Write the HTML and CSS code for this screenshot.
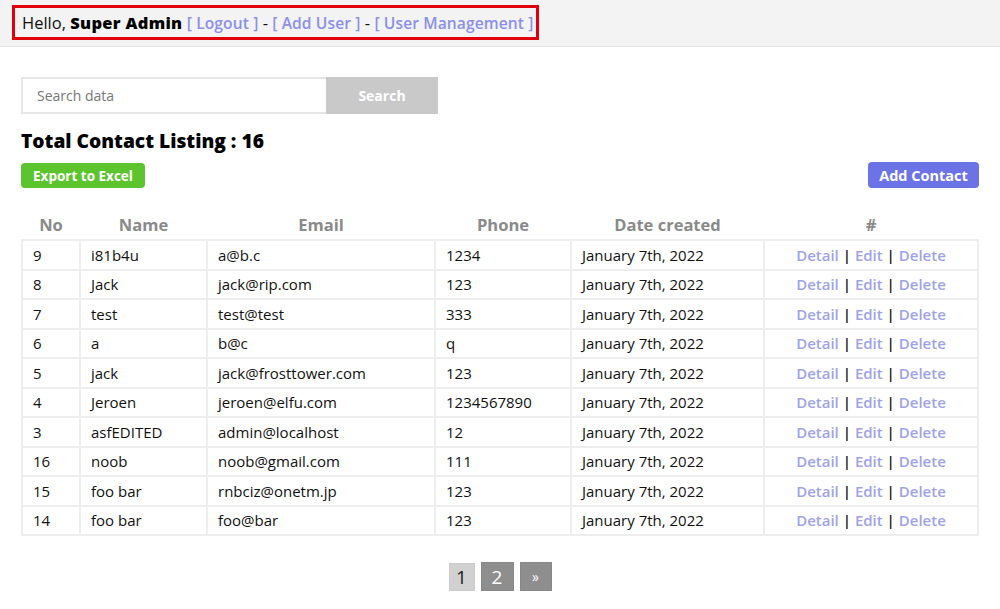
FILE: index.html
```html
<!DOCTYPE html>
<html>
<head>
<meta charset="utf-8">
<link rel="stylesheet" href="styles.css">
</head>
<body>
<header class="topbar">
  <div class="greeting">Hello, <b>Super Admin</b> <a class="link" href="#">[ Logout ]</a> - <a class="link" href="#">[ Add User ]</a> - <a class="link" href="#">[ User Management ]</a></div>
</header>
<main class="content">
  <form class="search">
    <input class="search-input" type="text" placeholder="Search data">
    <button class="search-btn" type="button">Search</button>
  </form>
  <h1 class="title">Total Contact Listing : 16</h1>
  <div class="actions">
    <button class="btn btn-green" type="button">Export to Excel</button>
    <button class="btn btn-blue" type="button">Add Contact</button>
  </div>
  <table class="grid">
    <colgroup>
      <col style="width:58px"><col style="width:127px"><col style="width:228px"><col style="width:136px"><col style="width:193px"><col>
    </colgroup>
    <thead>
      <tr><th>No</th><th>Name</th><th>Email</th><th>Phone</th><th>Date created</th><th>#</th></tr>
    </thead>
    <tbody>
      <tr><td>9</td><td>i81b4u</td><td>a@b.c</td><td>1234</td><td>January 7th, 2022</td><td class="ops"><a href="#">Detail</a> | <a href="#">Edit</a> | <a href="#">Delete</a></td></tr>
      <tr><td>8</td><td>Jack</td><td>jack@rip.com</td><td>123</td><td>January 7th, 2022</td><td class="ops"><a href="#">Detail</a> | <a href="#">Edit</a> | <a href="#">Delete</a></td></tr>
      <tr><td>7</td><td>test</td><td>test@test</td><td>333</td><td>January 7th, 2022</td><td class="ops"><a href="#">Detail</a> | <a href="#">Edit</a> | <a href="#">Delete</a></td></tr>
      <tr><td>6</td><td>a</td><td>b@c</td><td>q</td><td>January 7th, 2022</td><td class="ops"><a href="#">Detail</a> | <a href="#">Edit</a> | <a href="#">Delete</a></td></tr>
      <tr><td>5</td><td>jack</td><td>jack@frosttower.com</td><td>123</td><td>January 7th, 2022</td><td class="ops"><a href="#">Detail</a> | <a href="#">Edit</a> | <a href="#">Delete</a></td></tr>
      <tr><td>4</td><td>Jeroen</td><td>jeroen@elfu.com</td><td>1234567890</td><td>January 7th, 2022</td><td class="ops"><a href="#">Detail</a> | <a href="#">Edit</a> | <a href="#">Delete</a></td></tr>
      <tr><td>3</td><td>asfEDITED</td><td>admin@localhost</td><td>12</td><td>January 7th, 2022</td><td class="ops"><a href="#">Detail</a> | <a href="#">Edit</a> | <a href="#">Delete</a></td></tr>
      <tr><td>16</td><td>noob</td><td>noob@gmail.com</td><td>111</td><td>January 7th, 2022</td><td class="ops"><a href="#">Detail</a> | <a href="#">Edit</a> | <a href="#">Delete</a></td></tr>
      <tr><td>15</td><td>foo bar</td><td>rnbciz@onetm.jp</td><td>123</td><td>January 7th, 2022</td><td class="ops"><a href="#">Detail</a> | <a href="#">Edit</a> | <a href="#">Delete</a></td></tr>
      <tr><td>14</td><td>foo bar</td><td>foo@bar</td><td>123</td><td>January 7th, 2022</td><td class="ops"><a href="#">Detail</a> | <a href="#">Edit</a> | <a href="#">Delete</a></td></tr>
    </tbody>
  </table>
  <nav class="pager">
    <span class="page current">1</span>
    <a class="page" href="#">2</a>
    <a class="page next" href="#">»</a>
  </nav>
</main>
</body>
</html>
```
FILE: styles.css
```css
* { box-sizing: border-box; }
html, body { margin: 0; padding: 0; background: #fff; }
body {
  font-family: "Open Sans", "Liberation Sans", sans-serif;
  color: #111;
  width: 1000px;
  height: 609px;
  overflow: hidden;
}
.topbar {
  height: 47px;
  background: #f3f3f3;
  border-bottom: 1px solid #e4e4e4;
  padding: 5px 0 0 12px;
}
.greeting {
  display: inline-block;
  height: 35px;
  width: 527px;
  border: 3px solid #e0000c;
  padding: 4px 0 0 7px;
  font-size: 16.5px;
  line-height: 22px;
  white-space: nowrap;
  color: #111;
}
.greeting b { font-weight: 800; color: #000; letter-spacing: 0.3px; }
.link { color: #8a90e6; text-decoration: none; font-weight: 600; font-size: 15.6px; letter-spacing: 0.1px; }
.content { padding: 30px 21px 0 21px; }
.search { display: flex; height: 37px; width: 417px; margin: 0; }
.search-input {
  width: 305px;
  height: 37px;
  border: 2px solid #e6e6e6;
  border-right: none;
  padding: 0 14px;
  font-family: inherit;
  font-size: 14px;
  color: #333;
  outline: none;
}
.search-input::placeholder { color: #777; }
.search-btn {
  flex: 1;
  border: none;
  background: #c9c9c9;
  color: #fff;
  font-family: inherit;
  font-weight: 700;
  font-size: 14px;
}
.title {
  margin: 14px 0 0 0;
  font-size: 19.2px;
  line-height: 26px;
  font-weight: 800;
  color: #000;
}
.actions {
  display: flex;
  justify-content: space-between;
  align-items: flex-start;
  margin-top: 8px;
}
.btn {
  border: none;
  color: #fff;
  font-family: inherit;
  font-weight: 700;
  border-radius: 4px;
  padding: 0;
}
.btn-green { background: #5cc52d; width: 124px; height: 25px; font-size: 13.5px; margin-top: 1px; }
.btn-blue { background: #6b73e6; width: 111px; height: 26px; font-size: 14.5px; }
.grid {
  margin-top: 20px;
  width: 958px;
  border-collapse: collapse;
  table-layout: fixed;
  font-size: 15px;
}
.grid th {
  height: 32px;
  color: #8a8a8a;
  font-weight: 700;
  font-size: 16.5px;
  text-align: center;
  padding: 1px 0 0 0;
}
.grid td {
  height: 29.5px;
  border: 2px solid #eeeeee;
  padding: 0 0 0 10px;
  color: #111;
  white-space: nowrap;
}
.grid td.ops { text-align: center; padding: 0; font-weight: 600; color: #111; }
.ops a { color: #9ea3e8; text-decoration: none; }
.pager {
  display: flex;
  justify-content: center;
  gap: 6px;
  margin-top: 26px;
}
.page {
  display: flex;
  align-items: center;
  justify-content: center;
  height: 29px;
  width: 33px;
  background: #8e8e8e;
  color: #fff;
  font-size: 19px;
  text-decoration: none;
  border: 1px solid #888;
}
.page.current { width: 26px; background: #d1d1d1; color: #222; border-color: #ccc; height: 28px; margin-top: 1px; }
.page.next { width: 32px; font-size: 14px; }
```
